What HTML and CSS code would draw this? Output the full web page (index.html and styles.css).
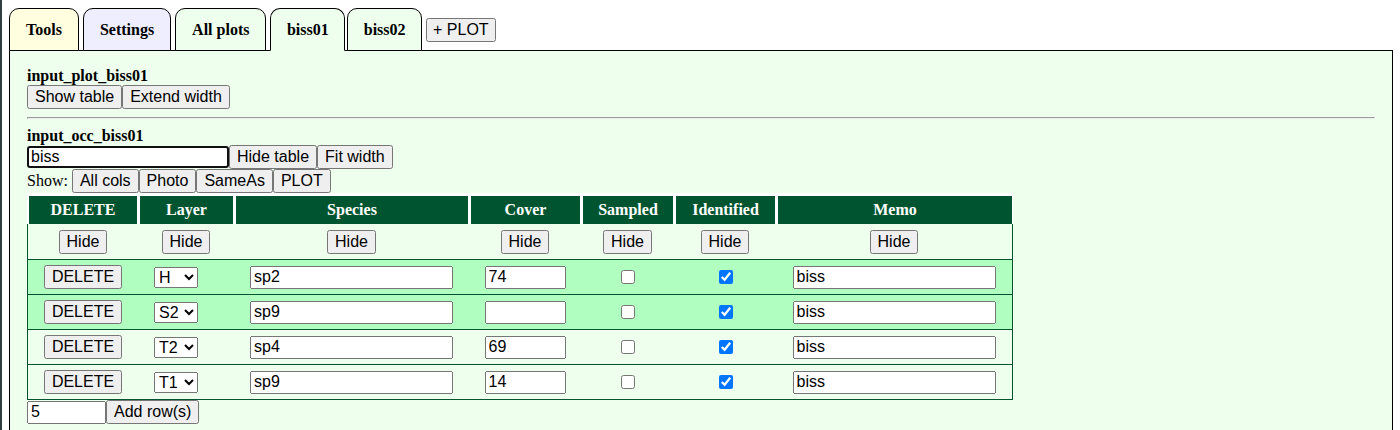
FILE: index.html
```html
<!DOCTYPE html>
<html>
<head>
<meta charset="utf-8">
<title>biss01</title>
<link rel="stylesheet" href="styles.css">
</head>
<body>
<div class="tabbar">
  <div class="tab tab-tools">Tools</div>
  <div class="tab tab-settings">Settings</div>
  <div class="tab tab-plots">All plots</div>
  <div class="tab tab-plot tab-active">biss01</div>
  <div class="tab tab-plot tab-plots">biss02</div>
  <button class="btn add-plot">+ PLOT</button>
</div>
<div class="panel">
  <div class="label">input_plot_biss01</div>
  <div class="row"><button class="btn">Show table</button><button class="btn">Extend width</button></div>
  <hr class="sep">
  <div class="label">input_occ_biss01</div>
  <div class="row"><input class="txt search" value="biss"><button class="btn">Hide table</button><button class="btn">Fit width</button></div>
  <div class="row"><span class="show-label">Show:</span><button class="btn">All cols</button><button class="btn">Photo</button><button class="btn">SameAs</button><button class="btn">PLOT</button></div>
  <table class="occ">
    <colgroup>
      <col class="c-del"><col class="c-layer"><col class="c-species"><col class="c-cover"><col class="c-sampled"><col class="c-ident"><col class="c-memo">
    </colgroup>
    <thead>
      <tr><th>DELETE</th><th>Layer</th><th>Species</th><th>Cover</th><th>Sampled</th><th>Identified</th><th>Memo</th></tr>
    </thead>
    <tbody>
      <tr class="hide-row">
        <td><button class="btn">Hide</button></td>
        <td><button class="btn">Hide</button></td>
        <td><button class="btn">Hide</button></td>
        <td><button class="btn">Hide</button></td>
        <td><button class="btn">Hide</button></td>
        <td><button class="btn">Hide</button></td>
        <td><button class="btn">Hide</button></td>
      </tr>
      <tr class="sel">
        <td><button class="btn">DELETE</button></td>
        <td><select class="layer"><option>T1</option><option>T2</option><option>S1</option><option>S2</option><option selected>H</option></select></td>
        <td><input class="txt wide" value="sp2"></td>
        <td><input class="txt cover" value="74"></td>
        <td><input class="chk" type="checkbox"></td>
        <td><input class="chk" type="checkbox" checked></td>
        <td><input class="txt wide" value="biss"></td>
      </tr>
      <tr class="sel">
        <td><button class="btn">DELETE</button></td>
        <td><select class="layer"><option>T1</option><option>T2</option><option>S1</option><option selected>S2</option><option>H</option></select></td>
        <td><input class="txt wide" value="sp9"></td>
        <td><input class="txt cover" value=""></td>
        <td><input class="chk" type="checkbox"></td>
        <td><input class="chk" type="checkbox" checked></td>
        <td><input class="txt wide" value="biss"></td>
      </tr>
      <tr>
        <td><button class="btn">DELETE</button></td>
        <td><select class="layer"><option>T1</option><option selected>T2</option><option>S1</option><option>S2</option><option>H</option></select></td>
        <td><input class="txt wide" value="sp4"></td>
        <td><input class="txt cover" value="69"></td>
        <td><input class="chk" type="checkbox"></td>
        <td><input class="chk" type="checkbox" checked></td>
        <td><input class="txt wide" value="biss"></td>
      </tr>
      <tr>
        <td><button class="btn">DELETE</button></td>
        <td><select class="layer"><option selected>T1</option><option>T2</option><option>S1</option><option>S2</option><option>H</option></select></td>
        <td><input class="txt wide" value="sp9"></td>
        <td><input class="txt cover" value="14"></td>
        <td><input class="chk" type="checkbox"></td>
        <td><input class="chk" type="checkbox" checked></td>
        <td><input class="txt wide" value="biss"></td>
      </tr>
    </tbody>
  </table>
  <div class="row"><input class="txt nrows" value="5"><button class="btn">Add row(s)</button></div>
</div>
</body>
</html>
```

FILE: styles.css
```css
html {
  border-left: 2px solid #2f3f3f;
  overflow: hidden;
  background: #fff;
}

body {
  margin: 8px 7px 0 7px;
  font-family: "Liberation Serif", "Times New Roman", serif;
  font-size: 16px;
  color: #000;
}

.tabbar {
  display: flex;
  align-items: baseline;
  gap: 4px;
  margin-bottom: -1px;
  position: relative;
  z-index: 1;
}

.tab {
  font-weight: bold;
  font-size: 16px;
  line-height: 18px;
  padding: 12px 16px 11px;
  border: 1px solid #000;
  border-radius: 10px 10px 0 0;
}

.tab-plot {
  padding-left: 15.5px;
  padding-right: 15.5px;
}

.tab-tools { background: #ffffe0; }
.tab-settings { background: #eeeeff; }
.tab-plots { background: #eeffee; }
.tab-active {
  background: #eeffee;
  border-bottom-color: #eeffee;
  margin-right: -2px;
}

.add-plot {
  margin-left: -3px;
  padding: 1px 5px;
}

.btn {
  font-family: "Liberation Sans", Arial, sans-serif;
  font-size: 16px;
  margin: 0;
}

.panel {
  border: 1px solid #000;
  background: #eeffee;
  padding: 16px 17px 20px 17px;
}

.label {
  font-weight: bold;
  line-height: 18px;
}

.row {
  display: flex;
  align-items: center;
}

.sep {
  margin: 8px 0;
}

.show-label {
  margin-right: 4px;
}

.txt {
  font-family: "Liberation Sans", Arial, sans-serif;
  font-size: 16px;
  box-sizing: border-box;
  height: 23px;
  margin: 0;
  padding: 1px 2px;
}

.search {
  width: 202px;
  height: 22px;
  border: 2px solid #101010;
  border-radius: 3px;
  outline: none;
}

.nrows { width: 79px; }
.wide { width: 203px; }
.cover { width: 81px; }

.occ {
  border-spacing: 0;
  table-layout: fixed;
  width: 986px;
}

.c-del { width: 111px; }
.c-layer { width: 96px; }
.c-species { width: 235px; }
.c-cover { width: 112px; }
.c-sampled { width: 93px; }
.c-ident { width: 102px; }
.c-memo { width: 237px; }

.occ th {
  background: #005530;
  color: #fff;
  font-weight: bold;
  border-top: 3px solid #fff;
  border-left: 2px solid #fff;
  border-right: 1px solid #fff;
  padding: 5px 0;
  line-height: 18px;
  text-align: center;
}

.occ td {
  padding: 5px 0;
  border-bottom: 1px solid #005530;
  text-align: center;
  font-size: 0;
  line-height: 0;
  height: 23.7px;
  vertical-align: middle;
}

.occ td:first-child { border-left: 1px solid #005530; }
.occ td:last-child { border-right: 1px solid #005530; }

.hide-row td {
  padding: 6px 0 5px;
  height: 24px;
}

.sel td {
  background: #b0ffc0;
}

.occ td .btn,
.occ td .txt,
.occ td .layer,
.occ td .chk {
  vertical-align: middle;
}

.chk {
  width: 14px;
  height: 14px;
}

.layer {
  font-family: "Liberation Sans", Arial, sans-serif;
  font-size: 16px;
  width: 44px;
  height: 21px;
  margin: 0 20px 0 0;
}
```
